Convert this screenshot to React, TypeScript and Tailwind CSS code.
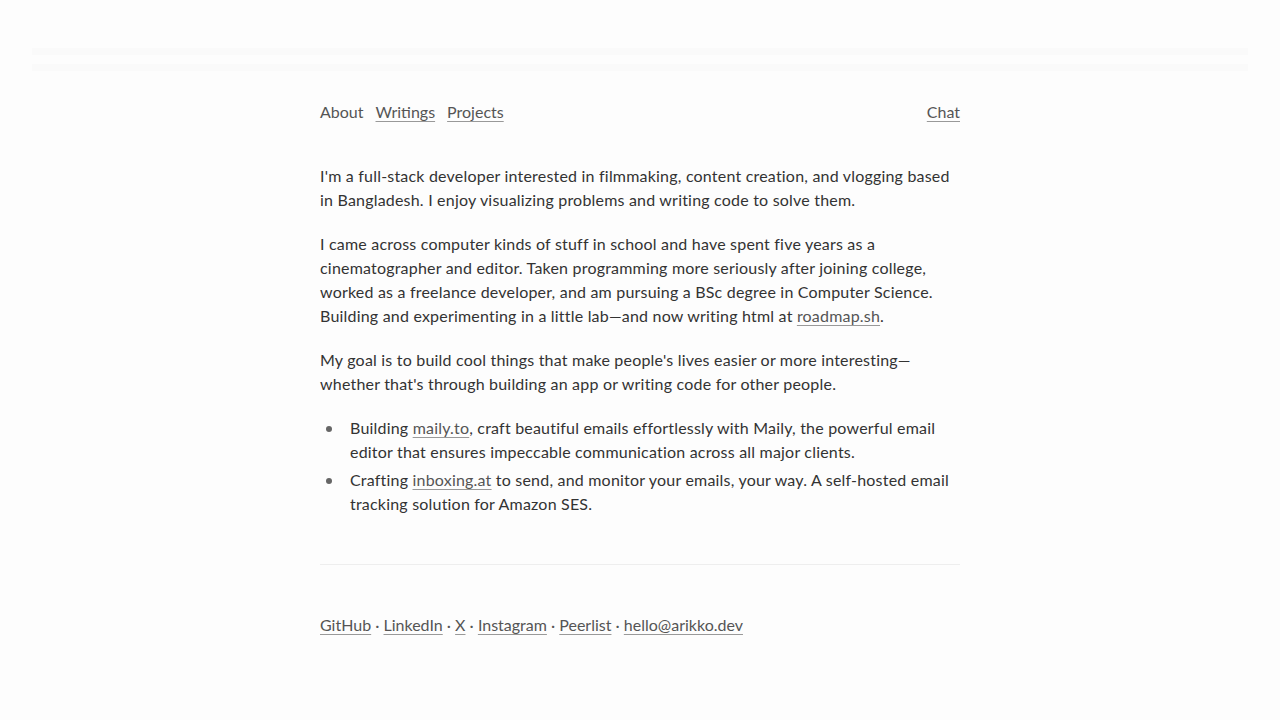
import React from "react";

const link = "text-[#555] underline decoration-[#999] underline-offset-[3px] decoration-[1px]";

function Item({ children }: { children: React.ReactNode }) {
  return (
    <li className="flex">
      <span className="w-[30px] shrink-0">
        <span className="ml-[6px] mt-[10px] block h-[6px] w-[6px] rounded-full bg-[#666]" />
      </span>
      <span>{children}</span>
    </li>
  );
}

export default function App() {
  return (
    <div className="min-h-screen bg-[#fdfdfd] text-[#333]" style={{ fontFamily: 'Lato, sans-serif' }}>
      <div className="px-8 pt-[48px]">
        <div className="h-[7px] bg-[#fafafa]" />
        <div className="mt-[9px] h-[7px] bg-[#fafafa]" />
      </div>
      <main className="mx-auto w-[640px] pt-[29px] text-[16px] leading-[24px]">
        <nav className="flex items-center justify-between">
          <div className="flex gap-3">
            <span className="text-[#555]">About</span>
            <a className={link}>Writings</a>
            <a className={link}>Projects</a>
          </div>
          <a className={link}>Chat</a>
        </nav>
        <div className="mt-[40px] flex flex-col gap-5 tracking-[0.2px]">
          <p>
            I'm a full-stack developer interested in filmmaking, content creation, and vlogging based in Bangladesh. I enjoy visualizing problems and writing code to solve them.
          </p>
          <p>
            I came across computer kinds of stuff in school and have spent five years as a cinematographer and editor. Taken programming more seriously after joining college, worked as a freelance developer, and am pursuing a BSc degree in Computer Science. Building and experimenting in a little lab—and now writing html at{" "}
            <a className={link}>roadmap.sh</a>.
          </p>
          <p>
            My goal is to build cool things that make people's lives easier or more interesting—whether that's through building an app or writing code for other people.
          </p>
          <ul className="flex flex-col gap-1">
            <Item>
              Building <a className={link}>maily.to</a>, craft beautiful emails effortlessly with Maily, the powerful email editor that ensures impeccable communication across all major clients.
            </Item>
            <Item>
              Crafting <a className={link}>inboxing.at</a> to send, and monitor your emails, your way. A self-hosted email tracking solution for Amazon SES.
            </Item>
          </ul>
        </div>
        <hr className="mt-[48px] border-t border-[#eee]" />
        <footer className="mt-[48px] text-[#555]">
          <a className={link}>GitHub</a> · <a className={link}>LinkedIn</a> · <a className={link}>X</a> ·{" "}
          <a className={link}>Instagram</a> · <a className={link}>Peerlist</a> ·{" "}
          <a className={link}>hello@arikko.dev</a>
        </footer>
      </main>
    </div>
  );
}
